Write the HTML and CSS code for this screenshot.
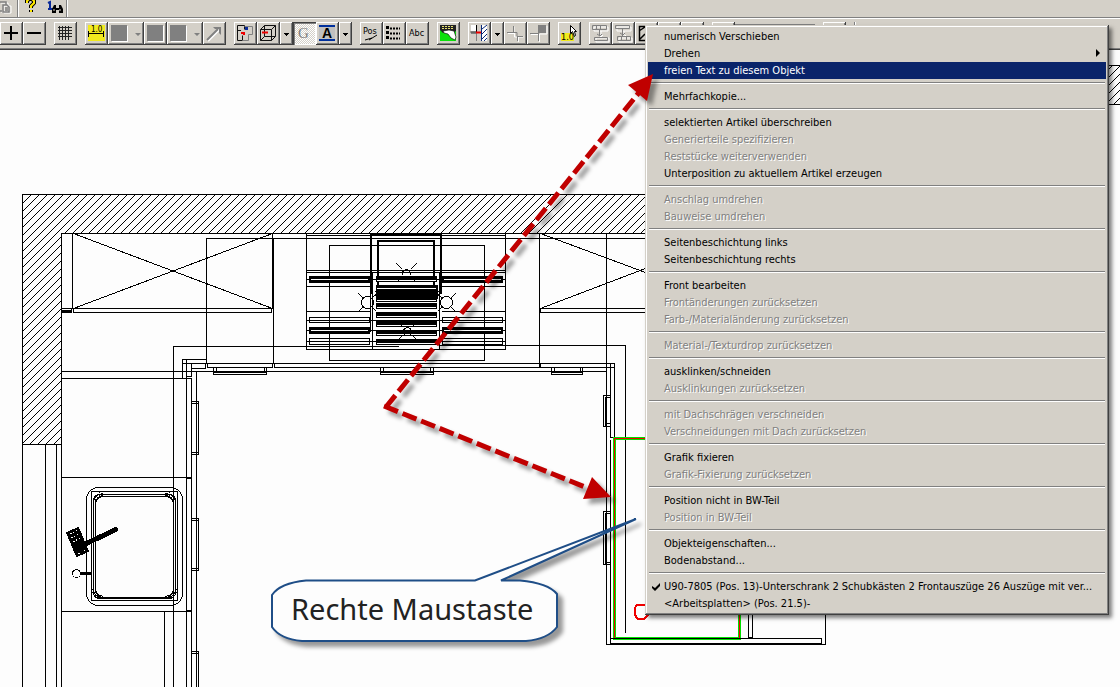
FILE: index.html
```html
<!DOCTYPE html>
<html lang="de">
<head>
<meta charset="utf-8">
<title>Küchenplanung</title>
<link rel="stylesheet" href="styles.css">
</head>
<body>
<header class="bars">
  <div class="strip">
    <button class="flat" aria-label="Einfügen"><svg width="17" height="17"><path d="M0 2h7v9H0M3 5h7v7H3z" fill="none" stroke="#fff" transform="translate(1 1)"/><path d="M0 2h6v3M0 11h2M3 5h4l2 2v5H3zM5 8h3M5 10h3" fill="none" stroke="#808080" stroke-width="1.5"/></svg></button>
    <span class="rule"></span>
    <button class="flat" aria-label="Hilfe"><svg width="24" height="17"><path d="M8 3V1l2-2h3l2 2v2l-3 3v2M12 10v2" fill="none" stroke="#000" stroke-width="4"/><path d="M8 3V1l2-2h3l2 2v2l-3 3v2M12 10v2" fill="none" stroke="#ffe900" stroke-width="2"/></svg></button>
    <button class="flat" aria-label="Suchen"><svg width="23" height="17"><path d="M5 3l2-1v7M5 9h5" fill="none" stroke="#0a2a9a" stroke-width="2"/><path d="M9 13V9l2-4h2v3h3V5h2l2 4v4h-4v-3h-3v3z" fill="#000"/><path d="M11 9v2M17 9v2M14 6v2" stroke="#d4d0c8"/></svg></button>
    <span class="rule"></span>
  </div>
  <div class="tools">
    <div class="group">
      <button class="tool" aria-label="Vergrößern"><svg><path d="M4 11h14M11 4v14" stroke="#000" stroke-width="2"/></svg></button>
      <button class="tool" aria-label="Verkleinern"><svg><path d="M4 11h14" stroke="#000" stroke-width="2"/></svg></button>
    </div>
    <div class="group">
      <button class="tool" aria-label="Raster"><svg><path d="M4 5.500h14M4 8.500h14M4 11.500h14M4 14.500h14M5.500 4v14M8.500 4v14M11.500 4v14M14.500 4v14" stroke="#222"/></svg></button>
    </div>
    <div class="group">
      <button class="tool" aria-label="Bemaßung"><svg><path fill="#f2ea1e" d="M3 3h17v16H3z"/><path d="M3.500 9v6M18.500 9v6M4 11.500h15" stroke="#000" fill="none"/><text x="6" y="10" class="t8">1.0</text></svg></button>
      <button class="tool wide" aria-label="Füllung"><svg><path fill="#fff" d="M4 4h16v16H4z"/><path fill="#808080" d="M3 3h16v16H3zM27 11h6l-3 3z"/></svg></button>
      <button class="tool" aria-label="Fläche"><svg><path fill="#fff" d="M4 4h16v16H4z"/><path fill="#808080" d="M3 3h16v16H3z"/></svg></button>
      <button class="tool wide" aria-label="Farbe"><svg><path fill="#fff" d="M4 4h16v16H4z"/><path fill="#808080" d="M3 3h16v16H3zM27 11h6l-3 3z"/></svg></button>
      <button class="tool" aria-label="Pfeil"><svg><path d="M5 19L17 7" stroke="#fff" stroke-width="2" fill="none"/><path d="M4 18L15 7" stroke="#808080" stroke-width="2" fill="none"/><path d="M10 5h8v8l-2-2V7h-4z" fill="#808080"/></svg></button>
    </div>
    <div class="group">
      <button class="tool" aria-label="Grundriss"><svg><path d="M3.500 18.500v-15h7v4M3 8.500h4M3.500 18.500h5v-5" stroke="#111" fill="none"/><path d="M10.500 4.500h8v8h-4v6h-6" stroke="#808080" fill="none"/><path d="M7 10h4v3H9v-1H7z" fill="#e00"/><path d="M11 5h3v3h-3z" fill="#0a2a9a"/></svg></button>
      <button class="tool" aria-label="Perspektive"><svg><path d="M3.500 7.500h11v11h-11zM7.500 3.500h11v11h-11zM3.500 7.500l4-4M14.500 7.500l4-4M3.500 18.500l4-4M14.500 18.500l4-4" stroke="#111" fill="none"/><path d="M5 10.500h6" stroke="#e00" stroke-width="2"/></svg></button>
      <button class="tool drop" aria-label="Perspektive wählen"><svg><path d="M4 11h5v1H8v1H7v1H6v-1H5v-1H4z"/></svg></button>
      <button class="tool pressed" aria-label="Grafik"><svg><text x="5" y="16" class="serif-g">G</text></svg></button>
      <button class="tool" aria-label="Textfarbe"><svg><path fill="#c0c0c0" d="M3 3h16v16H3z"/><path fill="#00309c" d="M3 3h16v2H3zM3 17h16v2H3z"/><text x="6" y="16" class="bold-a">A</text></svg></button>
      <button class="tool drop" aria-label="Textfarbe wählen"><svg><path d="M4 11h5v1H8v1H7v1H6v-1H5v-1H4z"/></svg></button>
    </div>
    <div class="group">
      <button class="tool" aria-label="Positionen"><svg><text x="3" y="12" class="t9">Pos</text><path d="M5 18l7-2M9 18l8-5" stroke="#000" fill="none"/></svg></button>
      <button class="tool" aria-label="Liste"><svg><path d="M3 5.500h3M3 10.500h3M3 15.500h3" stroke="#000" stroke-width="3"/><path d="M7 6.500h10M7 11.500h10M7 16.500h10" stroke="#000" stroke-width="2" stroke-dasharray="2 1"/></svg></button>
      <button class="tool" aria-label="Beschriftung"><svg><text x="3" y="14" class="t9">Abc</text></svg></button>
    </div>
    <div class="group">
      <button class="tool" aria-label="Auswahl"><svg><path fill="#0be00b" d="M3 3h16v16H3z"/><path fill="#222" d="M3 3h16v6l-3 2H6L3 8z"/><path stroke="#e8e070" stroke-dasharray="2 1" d="M5 4.500h12M5 6.500h12" fill="none"/><path fill="#fff" stroke="#000" stroke-width=".6" d="M6 9l6-1 5 1 2 6-1 3-4-2-3-4-4-1z"/></svg></button>
    </div>
    <div class="group">
      <button class="tool" aria-label="Wandanschluss"><svg><path fill="#fff" d="M3 3h5v7H3zM13 3h6v16h-6z"/><path d="M8.500 3v7h-6" stroke="#000" fill="none"/><path d="M3 11.500h5M8.500 11v8" stroke="#808080"/><path d="M8 10.500h6" stroke="#e00" stroke-width="2"/><path d="M13.500 3v16M14 7l5-4M14 12l5-5M14 17l5-5M16 19l3-3" stroke="#0a2a7a"/></svg></button>
      <button class="tool drop" aria-label="Anschluss wählen"><svg><path d="M4 11h5v1H8v1H7v1H6v-1H5v-1H4z"/></svg></button>
      <button class="tool" aria-label="Ausrichten"><svg><path d="M4 11.500h6v-7M10.500 11v4h9M14.500 15v5" stroke="#fff" fill="none"/><path d="M3 10.500h10v4h6M9.500 4v6M13.500 14v5" stroke="#808080" fill="none"/></svg></button>
      <button class="tool" aria-label="Ecke"><svg><path d="M4 12.500h8M12.500 12v8M20 4v8h-7" stroke="#fff" fill="none"/><path d="M3 11.500h8M11.500 11v8" stroke="#808080"/><path fill="#808080" d="M11 3h8v8h-8z"/></svg></button>
    </div>
    <div class="group">
      <button class="tool" aria-label="Maß wählen"><svg><path fill="#f2ea1e" d="M3 11h13v8H3z"/><text x="3" y="18" class="t9">1.0</text><path d="M12.500 3.500v8l2-2 2 5 1-1-1-4h2z" fill="#fff" stroke="#000"/></svg></button>
    </div>
    <div class="group">
      <button class="tool" aria-label="Abstand oben"><svg><path d="M4 4h14v4H4zM6 15h13v4H6zM11 8v6M9 12l2 2 2-2" stroke="#fff" fill="none" transform="translate(1 1)"/><path d="M3.500 3.500h14v4h-14zM5.500 15.500h13v3h-13zM10.500 7v7M8 12l3 2 2-2M7.500 4v3M11.500 4v3" stroke="#808080" fill="none"/></svg></button>
      <button class="tool" aria-label="Abstand unten"><svg><path d="M4 4h14v4H4zM6 15h13v4H6zM11 8v6M9 12l2 2 2-2" stroke="#fff" fill="none" transform="translate(1 1)"/><path d="M3.500 3.500h14v3h-14zM5.500 14.500h13v4h-13zM10.500 7v7M8 11l3 2 2-2M9.500 15v3M14.500 15v3" stroke="#808080" fill="none"/></svg></button>
      <button class="tool" aria-label="Ansicht"><svg><path d="M4.500 4.500h14v14h-14zM4 9l6-4M5 17l5-5" stroke="#000" stroke-width="1.5" fill="none"/></svg></button>
      <button class="tool" aria-label="Ebene 1"></button>
      <button class="tool" aria-label="Ebene 2"></button>
    </div>
    <div class="group">
      <button class="tool" aria-label="Ebene 3"></button>
      <select class="level" aria-label="Ebene"></select>
    </div>
    <div class="group"><button class="tool" aria-label="Optionen"></button></div>
    <span class="rule"></span>
  </div>
</header>

<main class="canvas">
  <svg class="plan" role="img" aria-label="Grundriss der Küche">
    <defs>
      <pattern id="hatch" width="8" height="8" patternUnits="userSpaceOnUse"><path d="M-1 3L3-1M1 9L9 1" stroke="#000" fill="none"/></pattern>
      <g id="slat"><path d="M0 0h61v7H0z" fill="#000" stroke="none"/><path d="M2 3.500h57" stroke="#fdfdfd"/></g>
      <g id="bar"><path d="M0 0h61v6H0z" fill="#000" stroke="none"/><path d="M1 4.500h59" stroke="#fdfdfd"/></g>
      <g id="lamp"><circle r="6" fill="none"/><path d="M-9-9l5 5M9-9l-5 5M-9 9l5-5M9 9l-5-5"/></g>
      <g id="small-lamp"><circle r="4" fill="none"/><path d="M-10-10l6 6M10-10l-6 6M-10 9l5-5M10 9l-5-5"/></g>
      <g id="corner"><path d="M0 11V0h11M2 12q0-9 10-10M4 12q0-7 8-8" fill="none"/><path d="M1 8l7-7M1 11L11 1" stroke-dasharray="2 1"/></g>
    </defs>
    <g class="lines" transform="translate(0 -50)">
      <path d="M22 194h623v39H61v211H22zM1000 65h140v39h-140z" fill="url(#hatch)" stroke="none"/>
      <g transform="translate(.5 .5)">
        <path d="M645 194H22v493M22 444h39M645 233H61v454M45 444v243M56 444v243M1100 65h40M1100 104h40"/>
        <!-- Hochschränke und Oberschränke -->
        <path d="M72 233v75M61 308h211v-75M273 238v125M73 233l199 75M73 308l199-75M73 308v4h198v-4M206 363V238h439M71 308v2M61 310h10M61 311h10M61 312h10"/>
        <path d="M539 233v134M540 233l105 39M540 308l105-40M540 308h105M540 308v4h105M606 233v411"/>
        <!-- Arbeitsplatte und Fronten -->
        <path d="M173 687V346h225M439 345h186v287M206 359h-24v19M186 359v328M182 363h432M191 376v-13M186 376h5M191 368h14v-5M207 363v4h65v-4M274 363v4h340M540 363v4M61 371h545M61 378h130v309M196 371v316"/>
        <path d="M213 367v7h53v-7M216 367v4M264 367v4M213 372h53M380 367v7h53v-7M383 367v4M430 367v4M380 372h53M551 367v7h31v-7M554 367v4M580 367v4M551 372h31"/>
        <path d="M610 437v-74M614 363v74h-4M610 395h-7v31h7M605 396v29M606 397h4M606 423h4M610 439v199M610 511h-7v53h7M605 512v51M606 513h4M606 562h4"/>
        <path d="M191 401h7v53h-7M191 403h6M191 452h6M191 518h7v52h-7M191 520h6M191 568h6M191 651h7v36M191 653h6"/>
        <path d="M61 477h130M186 478h5M61 611h130M186 610h5M164 611v76"/>
        <path d="M606 644h219v-31M610 643h211v-5H610v5M748 600v37h4v-37"/>
        <!-- Spüle -->
        <rect x="86" y="487" width="96" height="118" rx="12"/>
        <path d="M91 491h86v109H91z"/><rect x="93" y="494" width="82" height="104" rx="6"/><rect x="95" y="496" width="78" height="101" rx="8"/>
        <use href="#corner" x="91" y="491"/><use href="#corner" transform="translate(177 491) scale(-1 1)"/><use href="#corner" transform="translate(91 600) scale(1 -1)"/><use href="#corner" transform="translate(177 600) scale(-1 -1)"/>
        <path d="M66 532l12-5 10 24-12 5z" fill="#000"/><path d="M70 533l9-4M71 537l9-4M73 541l8-4M78 553l8-4" stroke="#fdfdfd" stroke-dasharray="1 2"/>
        <circle cx="79" cy="546" r="6" fill="#000"/><path d="M80 546l35-17" stroke-width="5" stroke-linecap="round"/>
        <circle cx="76" cy="573" r="4"/><path d="M80 573h11" stroke-width="3"/>
        <!-- Kochfeld und Haube -->
        <path d="M306 233v116h199V233M306 235h199M329 245h155v115H329zM306 270h199M306 272h199M306 286h64M441 286h64M306 311h64M441 311h64M306 279h199M306 330h199M306 341h199M306 320h199M372 271v78M439 271v78M370 293v38M374 291h64M374 295h64"/>
        <path d="M370.500 293v-58.500h70V293M377.500 286v-46h56v46" stroke-width="2"/>
        <path d="M309 317h60v5h-60zM309 338h60v6h-60zM442 317h60v5h-60zM442 338h60v6h-60z"/>
        <g transform="translate(-.5 -.5)">
          <use href="#slat" x="309" y="276"/><use href="#slat" x="442" y="276"/><use href="#slat" x="309" y="327"/><use href="#slat" x="442" y="327"/>
          <path d="M376 285h61v13h-61z" fill="#000"/><path d="M377 288.500h59" stroke="#fdfdfd"/>
          <use href="#bar" x="376" y="276"/><use href="#bar" x="376" y="296"/><use href="#bar" x="376" y="303"/><use href="#bar" x="376" y="312"/><use href="#bar" x="376" y="321"/><use href="#bar" x="376" y="330"/><use href="#bar" x="376" y="339"/>
        </g>
        <use href="#lamp" x="367" y="302"/><use href="#lamp" x="446" y="302"/><use href="#small-lamp" x="406" y="273"/><use href="#small-lamp" x="407" y="331"/>
        <!-- ausgewählter Unterschrank -->
        <path d="M614 438h125v200H614z" stroke="#00e000" stroke-width="3"/><path d="M739 438H614v200M739 438v200" stroke="#f00000"/>
        <path d="M610 638h211"/>
        <path d="M637 604h7l4 4v6l-4 4h-7l-3-4v-6z" stroke="#f00000" stroke-width="2"/>
      </g>
    </g>
  </svg>
</main>

<ul class="menu" role="menu">
  <li><button class="item" role="menuitem">numerisch Verschieben</button></li>
  <li><button class="item sub" role="menuitem">Drehen</button></li>
  <li><button class="item active" role="menuitem">freien Text zu diesem Objekt</button></li>
  <li class="sep" role="separator"></li>
  <li><button class="item" role="menuitem">Mehrfachkopie...</button></li>
  <li class="sep" role="separator"></li>
  <li><button class="item" role="menuitem">selektierten Artikel überschreiben</button></li>
  <li><button class="item" role="menuitem" disabled>Generierteile spezifizieren</button></li>
  <li><button class="item" role="menuitem" disabled>Reststücke weiterverwenden</button></li>
  <li><button class="item" role="menuitem">Unterposition zu aktuellem Artikel erzeugen</button></li>
  <li class="sep" role="separator"></li>
  <li><button class="item" role="menuitem" disabled>Anschlag umdrehen</button></li>
  <li><button class="item" role="menuitem" disabled>Bauweise umdrehen</button></li>
  <li class="sep" role="separator"></li>
  <li><button class="item" role="menuitem">Seitenbeschichtung links</button></li>
  <li><button class="item" role="menuitem">Seitenbeschichtung rechts</button></li>
  <li class="sep" role="separator"></li>
  <li><button class="item" role="menuitem">Front bearbeiten</button></li>
  <li><button class="item" role="menuitem" disabled>Frontänderungen zurücksetzen</button></li>
  <li><button class="item" role="menuitem" disabled>Farb-/Materialänderung zurücksetzen</button></li>
  <li class="sep" role="separator"></li>
  <li><button class="item" role="menuitem" disabled>Material-/Texturdrop zurücksetzen</button></li>
  <li class="sep" role="separator"></li>
  <li><button class="item" role="menuitem">ausklinken/schneiden</button></li>
  <li><button class="item" role="menuitem" disabled>Ausklinkungen zurücksetzen</button></li>
  <li class="sep" role="separator"></li>
  <li><button class="item" role="menuitem" disabled>mit Dachschrägen verschneiden</button></li>
  <li><button class="item" role="menuitem" disabled>Verschneidungen mit Dach zurücksetzen</button></li>
  <li class="sep" role="separator"></li>
  <li><button class="item" role="menuitem">Grafik fixieren</button></li>
  <li><button class="item" role="menuitem" disabled>Grafik-Fixierung zurücksetzen</button></li>
  <li class="sep" role="separator"></li>
  <li><button class="item" role="menuitem">Position nicht in BW-Teil</button></li>
  <li><button class="item" role="menuitem" disabled>Position in BW-Teil</button></li>
  <li class="sep" role="separator"></li>
  <li><button class="item" role="menuitem">Objekteigenschaften...</button></li>
  <li><button class="item" role="menuitem">Bodenabstand...</button></li>
  <li class="sep" role="separator"></li>
  <li><button class="item checked" role="menuitemradio" aria-checked="true"><svg class="tick" viewBox="0 0 8 8"><path d="M0 3l3 2 5-5v3L3 8 0 5z"/></svg>U90-7805 (Pos. 13)-Unterschrank 2 Schubkästen 2 Frontauszüge 26 Auszüge mit ver...</button></li>
  <li><button class="item" role="menuitemradio" aria-checked="false">&lt;Arbeitsplatten&gt; (Pos. 21.5)-</button></li>
</ul>

<svg class="notes">
  <g class="arrows">
    <path class="dash" d="M386 407L641 90"/>
    <path class="dash" d="M384 406L590 489"/>
    <path d="M653 74L628 85 647 101zM611 497L592 477 583 499z" fill="#c00000"/>
  </g>
  <path class="bubble" d="M306 580.500H475L636 519 501 580.500H520Q548 583 557 594V627Q548 639 526 641H302Q280 639 272 627V595Q280 583 306 580.500z"/>
  <text class="note" x="291" y="620">Rechte Maustaste</text>
</svg>
</body>
</html>
```
FILE: styles.css
```css
* { box-sizing: border-box; }
body {
  margin: 0;
  min-height: 100vh;
  display: flex;
  flex-direction: column;
  position: relative;
  overflow: hidden;
  background: #fdfdfd;
  font-family: "DejaVu Sans Condensed", "DejaVu Sans", sans-serif;
  font-size: 11px;
}
button { margin: 0; padding: 0; border: 0; background: none; font: inherit; color: inherit; }
.bars { background: #d4d0c8; border-bottom: 1px solid #404040; }
.strip { display: flex; height: 18px; border-bottom: 1px solid #808080; overflow: hidden; }
.flat { display: flex; }
.rule { width: 2px; border-left: 1px solid #808080; border-right: 1px solid #fff; }
.tools {
  display: flex;
  gap: 8px;
  height: 31px;
  padding: 3px 0;
  border-top: 1px solid #fff;
  border-bottom: 1px solid #808080;
}
.group { display: flex; flex: none; align-items: center; }
.tool {
  flex: none;
  width: 23px;
  height: 23px;
  background: #d4d0c8;
  box-shadow: inset -1px -1px #404040, inset 1px 1px #fff, inset -2px -2px #808080;
}
.tool.wide { width: 36px; }
.tool.drop { width: 13px; }
.tool svg { display: block; width: 100%; height: 100%; }
.tool.pressed {
  background: repeating-conic-gradient(#fff 0 25%, #d4d0c8 0 50%) 0 0 / 2px 2px;
  box-shadow: inset 1px 1px #404040, inset 2px 2px #808080, inset -1px -1px #fff;
}
.level { width: 80px; height: 19px; border: 1px solid #808080; background: #d4d0c8; appearance: none; }
.t8 { font: 8px "DejaVu Sans Condensed", sans-serif; }
.t9 { font: 9px "DejaVu Sans Condensed", sans-serif; }
.serif-g { font: 15px "Liberation Serif", serif; fill: #808080; }
.bold-a { font: bold 14px "Liberation Sans", sans-serif; }

.canvas { flex: 1; display: flex; min-height: 0; }
.plan { flex: 1; width: 100%; }
.lines { fill: none; stroke: #000; stroke-width: 1; shape-rendering: crispEdges; }

.menu {
  position: absolute;
  left: 645px;
  top: 25px;
  width: 464px;
  margin: 0;
  padding: 3px;
  list-style: none;
  background: #d4d0c8;
  box-shadow: inset -1px -1px #404040, inset 1px 1px #d4d0c8, inset -2px -2px #808080, inset 2px 2px #fff, 3px 3px 4px rgba(0, 0, 0, .5);
}
.item {
  display: block;
  position: relative;
  width: 100%;
  height: 17px;
  padding: 0 16px;
  line-height: 17px;
  text-align: left;
  white-space: nowrap;
}
.item:disabled { color: #808080; text-shadow: 1px 1px #fff; }
.item.active { background: #0a246a; color: #fff; }
.item.sub::after {
  content: "";
  position: absolute;
  right: 6px;
  top: 4px;
  border: 4px solid transparent;
  border-left-color: #000;
  border-right: 0;
}
.tick { position: absolute; left: 4px; top: 5px; width: 8px; height: 8px; }
.sep { height: 2px; margin: 3px 1px 4px; border-top: 1px solid #808080; border-bottom: 1px solid #fff; }

.notes { position: absolute; inset: 0; width: 100%; height: 100%; pointer-events: none; }
.arrows, .bubble { filter: drop-shadow(5px 5px 2px rgba(0, 0, 0, .4)); }
.dash { fill: none; stroke: #c00000; stroke-width: 5; stroke-dasharray: 15 5; }
.bubble { fill: #fdfdfd; stroke: #1f4e87; stroke-width: 2; }
.note { font: 29px "Noto Sans", sans-serif; fill: #222; }
```
